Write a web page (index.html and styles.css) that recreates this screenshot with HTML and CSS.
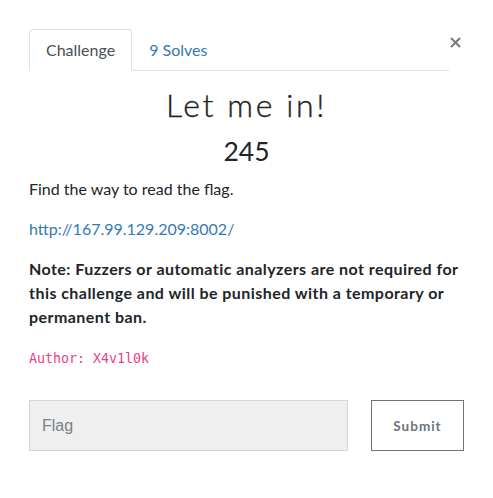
FILE: index.html
```html
<!DOCTYPE html>
<html lang="en">
<head>
<meta charset="utf-8">
<title>Let me in!</title>
<link rel="stylesheet" href="styles.css">
</head>
<body>
<div class="modal-body">
  <div class="tabs-row">
    <ul class="nav-tabs">
      <li><a class="nav-link active" href="#">Challenge</a></li>
      <li><a class="nav-link" href="#">9 Solves</a></li>
    </ul>
    <button class="close" aria-label="Close">
      <svg width="11" height="11" viewBox="0 0 11 11"><path d="M1 1 L10 10 M10 1 L1 10" stroke="#7b7b7b" stroke-width="2.1" fill="none"/></svg>
    </button>
  </div>
  <h3 class="challenge-name">Let me in!</h3>
  <h4 class="challenge-value">245</h4>
  <div class="challenge-desc">
    <p>Find the way to read the flag.</p>
    <p><a href="#">http://167.99.129.209:8002/</a></p>
    <p><strong>Note: Fuzzers or automatic analyzers are not required for this challenge and will be punished with a temporary or permanent ban.</strong></p>
    <p><code>Author: X4v1l0k</code></p>
  </div>
  <div class="submit-row">
    <input class="flag-input" type="text" placeholder="Flag">
    <button class="submit-btn">Submit</button>
  </div>
</div>
</body>
</html>
```
FILE: styles.css
```css
* { box-sizing: border-box; }
html, body { margin: 0; padding: 0; background: #fff; }
body {
  font-family: Lato, "Noto Sans", sans-serif;
  font-size: 16px;
  line-height: 24px;
  color: #212529;
}
.modal-body { padding: 29px 29px 20px 29px; }
.tabs-row { display: flex; align-items: flex-start; }
.nav-tabs {
  list-style: none;
  margin: 0;
  padding: 0;
  display: flex;
  flex: 0 0 420px;
  border-bottom: 1px solid #dee2e6;
}
.nav-link {
  display: block;
  padding: 8px 16px;
  border: 1px solid transparent;
  border-top-left-radius: 4px;
  border-top-right-radius: 4px;
  margin-bottom: -1px;
  color: #337ab7;
  text-decoration: none;
  line-height: 24px;
}
.nav-link.active {
  color: #495057;
  background: #fff;
  border-color: #dee2e6 #dee2e6 #fff;
}
.close {
  margin: 8px 0 0 1px;
  padding: 0;
  border: 0;
  background: transparent;
  width: 11px;
  height: 11px;
  display: block;
  cursor: pointer;
}
.close svg { display: block; }
.challenge-name {
  margin: 15px 0 0;
  text-align: center;
  font-weight: 300;
  font-size: 32px;
  line-height: 38px;
  letter-spacing: 2.6px;
  color: #222;
  -webkit-text-stroke: 0.35px #222;
}
.challenge-value {
  margin: 11px 0 0;
  text-align: center;
  font-weight: 400;
  font-size: 26.5px;
  line-height: 33px;
  color: #212529;
}
.challenge-desc { margin-top: 9px; }
.challenge-desc p { margin: 0 0 16px; }
.challenge-desc a { color: #337ab7; text-decoration: none; }
.challenge-desc strong { font-weight: 700; letter-spacing: 0.45px; }
code {
  font-family: "DejaVu Sans Mono", monospace;
  font-size: 13.3px;
  color: #e83e8c;
}
.submit-row {
  display: flex;
  justify-content: space-between;
  align-items: flex-start;
  margin-top: 29px;
}
.flag-input {
  width: calc(75% - 7.5px);
  height: 51px;
  border: 1px solid #d3d6da;
  background: #efefef;
  padding: 0 12px;
  font-family: "Liberation Sans", Arial, sans-serif;
  font-size: 16px;
  color: #495057;
  outline: none;
}
.flag-input::placeholder { color: #7a8087; }
.submit-btn {
  width: 93px;
  height: 51px;
  background: #fff;
  border: 1px solid #6c757d;
  color: #6c757d;
  font-family: Lato, sans-serif;
  font-weight: 700;
  font-size: 13.5px;
  letter-spacing: 1px;
  padding: 0;
  cursor: pointer;
}
```
